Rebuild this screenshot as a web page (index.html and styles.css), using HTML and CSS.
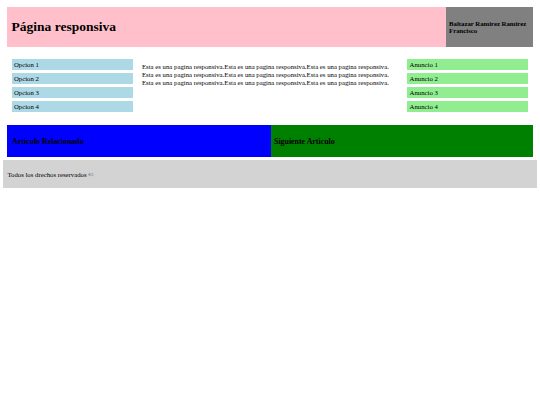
FILE: index.html
```html
<!DOCTYPE html>
<html lang="es">
<head>
<meta charset="utf-8">
<title>Página responsiva</title>
<link rel="stylesheet" href="styles.css">
</head>
<body>
<div class="page">
  <header class="header">
    <div class="title"><h1>Página responsiva</h1></div>
    <div class="author">Baltazar Ramirez Ramirez Francisco</div>
  </header>
  <section class="content">
    <nav class="menu">
      <div class="item">Opcion 1</div>
      <div class="item">Opcion 2</div>
      <div class="item">Opcion 3</div>
      <div class="item">Opcion 4</div>
    </nav>
    <main class="main">
      <p>Esta es una pagina responsiva.Esta es una pagina responsiva.Esta es una pagina responsiva.<br>Esta es una pagina responsiva.Esta es una pagina responsiva.Esta es una pagina responsiva.<br>Esta es una pagina responsiva.Esta es una pagina responsiva.Esta es una pagina responsiva.</p>
    </main>
    <aside class="ads">
      <div class="ad">Anuncio 1</div>
      <div class="ad">Anuncio 2</div>
      <div class="ad">Anuncio 3</div>
      <div class="ad">Anuncio 4</div>
    </aside>
  </section>
  <section class="articles">
    <div class="article related"><h3>Articulo Relacionado</h3></div>
    <div class="article next"><h3>Siguiente Articulo</h3></div>
  </section>
</div>
<footer class="footer">Todos los drechos reservados ©</footer>
</body>
</html>
```

FILE: styles.css
```css
html, body {
  background: #ffffff;
}
body {
  margin: 3.4px;
  font-family: "Liberation Serif", "Times New Roman", serif;
  font-size: 6.75px;
  color: #000;
}
.page {
  padding: 3.6px 3.6px 3px 3.6px;
}
.header {
  display: flex;
  height: 40px;
}
.title {
  flex: 1;
  background: #ffc0cb;
  display: flex;
  align-items: center;
  padding-left: 4.6px;
}
.title h1 {
  margin: 0;
  font-size: 13.5px;
  font-weight: bold;
}
.author {
  width: 84px;
  background: #808080;
  display: flex;
  align-items: center;
  padding-left: 3px;
  font-weight: bold;
  line-height: 7.4px;
}
.content {
  display: flex;
  align-items: flex-start;
  margin: 12px 0 13px 0;
}
.menu, .ads {
  width: 121px;
  display: flex;
  flex-direction: column;
  gap: 2.4px;
}
.menu {
  margin-left: 5px;
}
.ads {
  margin-right: 5px;
}
.item, .ad {
  height: 11.5px;
  display: flex;
  align-items: center;
}
.item {
  background: #add8e6;
  padding-left: 2px;
}
.ad {
  background: #90ee90;
  padding-left: 2.6px;
}
.main {
  flex: 1;
  padding: 0 9px;
}
.main p {
  margin: 4.5px 0 0 0;
  font-size: 6.75px;
  line-height: 7.8px;
}
.articles {
  display: flex;
  height: 32px;
}
.article {
  flex: 1;
  display: flex;
  align-items: center;
  padding-left: 5px;
}
.article h3 {
  margin: 0;
  font-size: 7.9px;
  font-weight: bold;
}
.related {
  background: #0000ff;
}
.next {
  background: #008000;
  padding-left: 3px;
}
.footer {
  background: #d3d3d3;
  height: 28px;
  display: flex;
  align-items: center;
  padding-left: 4px;
}
```
